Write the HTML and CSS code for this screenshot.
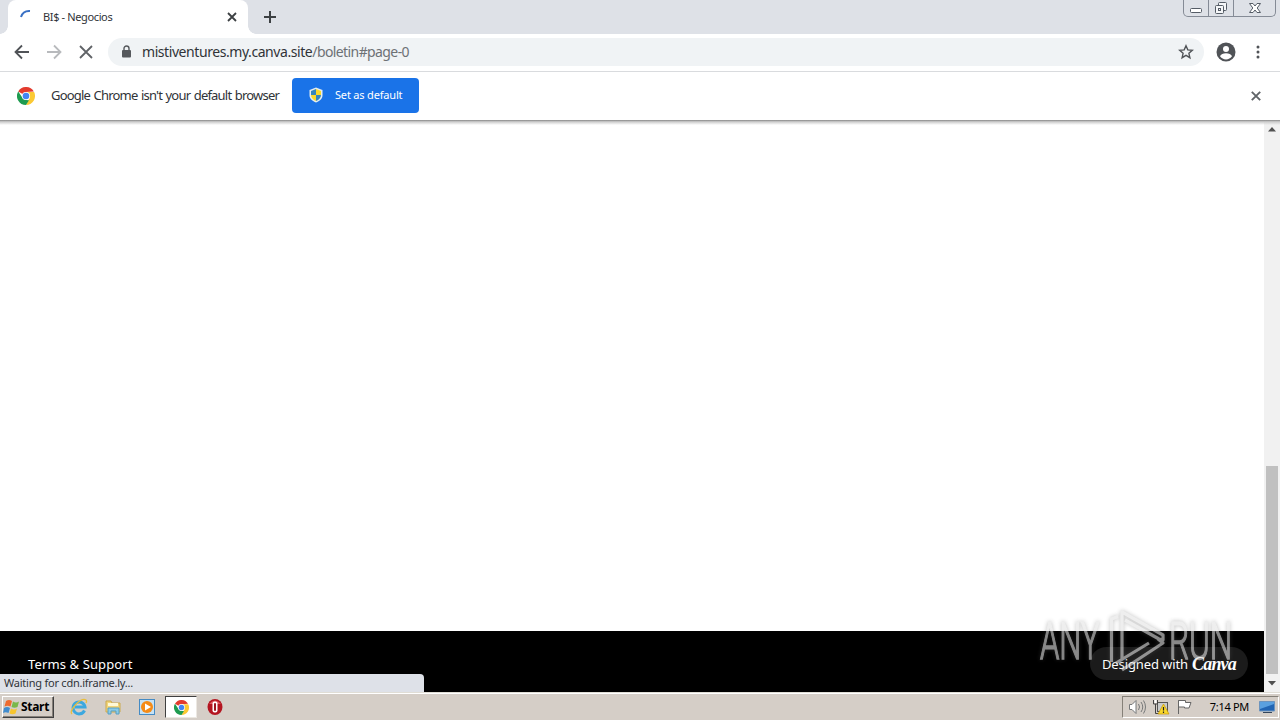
FILE: index.html
```html
<!DOCTYPE html>
<html lang="en">
<head>
  <meta charset="UTF-8" />
  <title>BI$ - Negocios</title>
  <link rel="stylesheet" href="styles.css">
</head>
<body>
  <!-- shared chrome logo -->
  <svg width="0" height="0" class="defs">
    <symbol id="chrome" viewBox="0 0 18 18">
      <path fill="#e33b2e" d="M9 9 1.2 4.5A9 9 0 0 1 16.8 4.5L9 5z"/>
      <path fill="#fbc934" d="M9 5h8.1A9 9 0 0 1 9 18l3.5-7z"/>
      <path fill="#1e9b50" d="M1.2 4.5 5.6 11 9 13l3 .2L9 18A9 9 0 0 1 1.2 4.5z"/>
      <circle cx="9" cy="9" r="4.1" fill="#fff"/>
      <circle cx="9" cy="9" r="3.3" fill="#4285f4"/>
    </symbol>
  </svg>

  <div class="tabstrip">
    <div class="tab">
      <svg class="spinner" width="16" height="16"><path d="M2 8Q4 1.500 11 2" fill="none" stroke="#3970c4" stroke-width="2"/></svg>
      <span class="tab-title">BI$ - Negocios</span>
      <svg class="tab-close" width="10" height="10"><path d="M1 1l8 8M9 1l-8 8" stroke="#3c4043" stroke-width="1.8"/></svg>
    </div>
    <svg class="new-tab" width="12" height="12"><path d="M6 0v12M0 6h12" stroke="#3c4043" stroke-width="2"/></svg>
    <div class="window-buttons">
      <span class="min"><svg width="14" height="14"><rect x="1.5" y="7.5" width="11" height="4" rx="1" fill="#fff" stroke="#555c66"/></svg></span>
      <span class="max"><svg width="14" height="14" fill="#f5f6f8" stroke="#555c66"><rect x="4.5" y="1.5" width="8" height="8" rx="1"/><rect x="1.5" y="4.5" width="8" height="8" rx="1"/><rect x="4.5" y="7.5" width="2" height="2"/></svg></span>
      <span class="close"><svg width="14" height="14"><path d="M1.5 2.5h3.500l2 2.500 2-2.500h3.500L9.200 7l3.300 4.500H9L7 9l-2 2.500H1.500L4.800 7z" fill="#fff" stroke="#555c66"/></svg></span>
    </div>
  </div>

  <div class="toolbar">
    <svg class="nav" width="16" height="16" fill="none" stroke="#505357" stroke-width="1.8"><path d="M15 8H2M8 1.500 1.500 8 8 14.500"/></svg>
    <svg class="nav" width="16" height="16" fill="none" stroke="#b8babd" stroke-width="1.8"><path d="M1 8h13M8 1.500 14.500 8 8 14.500"/></svg>
    <svg class="nav" width="16" height="16" stroke="#606367" stroke-width="1.8"><path d="M2 2l12 12M14 2 2 14"/></svg>
    <div class="omnibox">
      <svg width="10" height="13"><rect x="1" y="5" width="9" height="7.500" rx="1" fill="#55585c"/><path d="M3 6V3.500a2.500 2.500 0 0 1 5 0V6" fill="none" stroke="#55585c" stroke-width="1.400"/></svg>
      <span class="url">mistiventures.my.canva.site<span class="path">/boletin#page-0</span></span>
      <svg class="star" width="16" height="16"><path d="M8 1.800l1.800 4.100 4.500.400-3.400 3 1 4.400L8 11.400l-3.900 2.300 1-4.400-3.400-3 4.500-.400z" fill="none" stroke="#505357" stroke-width="1.400"/></svg>
    </div>
    <svg class="avatar" width="20" height="20"><circle cx="10" cy="10" r="9.500" fill="#505357"/><circle cx="10" cy="7" r="3" fill="#fff"/><path d="M4 14.300c1.300-4 10.700-4 12 0a7.300 7.300 0 0 1-12 0z" fill="#fff"/></svg>
    <svg class="kebab" width="4" height="14" fill="#505357"><circle cx="2" cy="2" r="1.500"/><circle cx="2" cy="7" r="1.500"/><circle cx="2" cy="12" r="1.500"/></svg>
  </div>

  <div class="infobar">
    <svg width="18" height="18"><use href="#chrome"/></svg>
    <span class="infobar-text">Google Chrome isn't your default browser</span>
    <button class="set-default">
      <svg width="14" height="16"><path d="M7 .5 13.500 3v5c0 4-3 6-6.500 7.500C3.500 14 .5 12 .5 8V3z" fill="#e4edf0"/><path d="M7 2v6H2V4z" fill="#3586bd"/><path d="M7 2l5 2v4H7z" fill="#fad92a"/><path d="M2 8h5v6C4 12.600 2 11 2 8z" fill="#fad92a"/><path d="M7 8h5c0 3-2 4.600-5 6z" fill="#3586bd"/></svg>
      <span>Set as default</span>
    </button>
    <svg class="infobar-close" width="10" height="10"><path d="M.8.8l8.400 8.400M9.200.8.8 9.200" stroke="#606468" stroke-width="1.9"/></svg>
  </div>

  <div class="viewport">
    <div class="page">
      <div class="footer">
        <span class="terms">Terms &amp; Support</span>
        <div class="badge"><span class="designed">Designed with</span><span class="canva">Canva</span></div>
      </div>
    </div>
    <div class="scrollbar">
      <svg width="8" height="5"><path d="M0 4.500 4 0l4 4.500z" fill="#505050"/></svg>
      <div class="thumb"></div>
      <svg width="8" height="5"><path d="M0 0h8L4 4.500z" fill="#505050"/></svg>
    </div>
    <div class="status">Waiting for cdn.iframe.ly...</div>
    <svg class="watermark" width="206" height="70">
      <text transform="translate(6 52) scale(.62 1)" textLength="96" lengthAdjust="spacingAndGlyphs">ANY</text>
      <text transform="translate(135 52) scale(.62 1)" textLength="102" lengthAdjust="spacingAndGlyphs">RUN</text>
      <path d="M84 9.500 77.500 12v43M88 53V5l41 23v5l-4-1-34-19M115 36 82 56M88 63l41-27-5-4"/>
    </svg>
  </div>

  <div class="taskbar">
    <div class="start">
      <svg width="17" height="16"><path d="M3 2q3-2 6 0L7.500 7.500q-3-1.500-6 0z" fill="#ee6b2f"/><path d="M10 2.500q3 2 6 0L14.500 8q-3 1.500-6 0z" fill="#79b84a"/><path d="M1 9q3-2 6 0l-1.500 5q-3-1.500-5.500 0z" fill="#418cce"/><path d="M8 9.500q3 2 6 0l-1.500 5q-3 1.500-6 0z" fill="#f7c52e"/></svg>
      <span>Start</span>
    </div>
    <div class="quick">
      <svg width="18" height="18" fill="none"><path d="M14.500 12.500A6 6 0 1 1 15 9H5" stroke="#3ca8df" stroke-width="3"/><path d="M2 16C-2 13 11-1 16 2c1 .8.5 2 0 3" stroke="#e8be3e" stroke-width="1.3"/></svg>
      <svg width="18" height="18"><path d="M2 3h5l1 2h8v9H2z" fill="#f1d57a" stroke="#cba94f"/><path d="M4 5h10v3H4z" fill="#fff9d6"/><path d="M4 16v-6h11v6h-3v-3H7v3z" fill="#8acbe8" stroke="#579fc3"/></svg>
      <svg width="18" height="18"><rect x="1.5" y="1.5" width="15" height="15" fill="#c6e2f5" stroke="#458bc4"/><circle cx="9" cy="9" r="6" fill="#f58b17"/><path d="M7 5.500v7l6-3.500z" fill="#fff"/></svg>
      <div class="active-task"><svg width="15" height="15"><use href="#chrome"/></svg></div>
      <svg width="18" height="18"><ellipse cx="9" cy="9" rx="7.500" ry="8" fill="#b41520"/><path d="M3 6Q9-1 15 6z" fill="#df5960"/><rect x="6.500" y="3.500" width="5" height="11" rx="2" fill="#fff"/><rect x="8" y="5" width="2" height="8" rx="1" fill="#9c1520"/></svg>
    </div>
    <div class="tray">
      <svg width="18" height="16" fill="#fff" stroke="#77797a"><path d="M1.500 5.500H4l4-4v13l-4-4H1.500z"/><path d="M10.500 5q2 3 0 6M13 3q3.500 5 0 10M15.500 1.500q4 6.500 0 13" fill="none"/></svg>
      <svg width="18" height="16"><rect x="5.500" y="3.500" width="10" height="9" fill="#c9cbcb" stroke="#555"/><path d="M1.500 1v4h4V1M3.500 5v9.500H8" fill="none" stroke="#444"/><path d="M2.500 1h2v3h-2z" fill="#fff"/><path d="M11.500 5l5.500 10H6z" fill="#fad92c" stroke="#c99700" stroke-width=".7"/><path d="M11.500 8v3.500M11.500 12.500V14" stroke="#222" stroke-width="1.2"/></svg>
      <svg width="16" height="16" fill="#fff" stroke="#666"><path d="M2.500 1v14"/><path d="M2.500 1.500h7v2H15L13 9H8.500V8h-6z"/></svg>
      <span class="clock">7:14 PM</span>
      <svg width="16" height="14"><path d="M.5 1.500h15V11H.5z" fill="#2265b3" stroke="#6c94be"/><path d="M1 2h14v2L1 9z" fill="#5aa0df"/><path d="M4 12.500h9" stroke="#34455b"/></svg>
    </div>
  </div>
</body>
</html>
```
FILE: styles.css
```css
* {
  box-sizing: border-box;
}
body {
  margin: 0;
  width: 1280px;
  height: 720px;
  overflow: hidden;
  display: flex;
  flex-direction: column;
  background: #fff;
  font-family: "Noto Sans", "Open Sans", sans-serif;
  font-size: 11px;
  color: #303338;
}
svg {
  display: block;
  flex: none;
}
.defs {
  position: absolute;
}
span {
  white-space: nowrap;
}

/* tabs */
.tabstrip {
  height: 34px;
  flex: none;
  display: flex;
  align-items: center;
  background: #dee1e7;
  padding-left: 8px;
}
.tab {
  width: 240px;
  height: 34px;
  display: flex;
  align-items: center;
  padding: 0 11px;
  background: #fff;
  border-radius: 8px 8px 0 0;
  position: relative;
}
.tab::before,
.tab::after {
  content: "";
  position: absolute;
  bottom: 0;
  width: 8px;
  height: 8px;
}
.tab::before {
  left: -8px;
  background: radial-gradient(circle at 0 0, #dee1e7 7.5px, #fff 8px);
}
.tab::after {
  right: -8px;
  background: radial-gradient(circle at 100% 0, #dee1e7 7.5px, #fff 8px);
}
.tab-title {
  margin-left: 8px;
  padding-bottom: 2px;
  letter-spacing: -0.37px;
}
.tab-close {
  margin-left: auto;
}
.new-tab {
  margin-left: 16px;
}
.window-buttons {
  align-self: flex-start;
  display: flex;
  height: 17px;
  margin-left: auto;
  margin-right: 4px;
  border: 1px solid #858b96;
  border-top: 0;
  border-radius: 0 0 5px 5px;
}
.window-buttons span {
  display: flex;
  align-items: center;
  justify-content: center;
  border-left: 1px solid #858b96;
}
.window-buttons .min {
  width: 24px;
  border-left: 0;
}
.window-buttons .max {
  width: 25px;
}
.window-buttons .close {
  width: 42px;
}

/* address bar */
.toolbar {
  height: 38px;
  flex: none;
  display: flex;
  align-items: center;
  padding: 0 20px 2px 14px;
  border-bottom: 1px solid #d9dbde;
}
.nav {
  margin-right: 16px;
}
.omnibox {
  display: flex;
  align-items: center;
  width: 1096px;
  height: 28px;
  margin-left: -2px;
  padding: 0 10px 0 13px;
  border-radius: 14px;
  background: #f0f3f5;
}
.url {
  margin-left: 11px;
  font-size: 14px;
  letter-spacing: -0.43px;
}
.path {
  color: #6d7175;
  letter-spacing: -0.6px;
}
.star {
  margin-left: auto;
}
.avatar {
  margin-left: 12px;
}
.kebab {
  margin-left: auto;
}

/* default browser bar */
.infobar {
  height: 49px;
  flex: none;
  display: flex;
  align-items: center;
  padding: 0 19px 1px 17px;
}
.infobar-text {
  width: 241px;
  margin-left: 16px;
  padding-bottom: 2px;
  font-size: 13px;
  letter-spacing: -0.8px;
  word-spacing: 0.9px;
}
.set-default {
  width: 127px;
  height: 35px;
  display: flex;
  align-items: center;
  margin-bottom: 2px;
  padding: 0 0 0 17px;
  border: 0;
  border-radius: 4px;
  background: #1a73e8;
  color: #fff;
  font-family: inherit;
  font-size: 11px;
  letter-spacing: -0.18px;
}
.set-default span {
  margin-left: 12px;
  padding-bottom: 2px;
}
.infobar-close {
  margin-left: auto;
}

/* page */
.viewport {
  flex: 1;
  display: flex;
  position: relative;
}
.viewport::before {
  content: "";
  position: absolute;
  left: 0;
  right: 0;
  top: -1px;
  height: 5px;
  background: linear-gradient(#858585, #ccc 35%, rgba(255, 255, 255, 0));
}
.page {
  flex: 1;
  display: flex;
  flex-direction: column;
  justify-content: flex-end;
}
.footer {
  height: 61px;
  display: flex;
  align-items: flex-start;
  justify-content: space-between;
  padding: 16px 16px 0 28px;
  background: #000;
  color: #fff;
}
.terms {
  margin-top: 8px;
  font-size: 13px;
  line-height: 18px;
  letter-spacing: 0.12px;
}
.badge {
  display: flex;
  align-items: center;
  width: 158px;
  height: 33px;
  padding-left: 12px;
  border-radius: 17px;
  background: #1b1b1b;
}
.designed {
  width: 90px;
  font-size: 13px;
  letter-spacing: -0.12px;
}
.canva {
  font-family: "Liberation Serif", serif;
  font-size: 18px;
  font-style: italic;
  font-weight: bold;
  line-height: 20px;
  letter-spacing: -0.8px;
}
.scrollbar {
  width: 16px;
  display: flex;
  flex-direction: column;
  align-items: center;
  padding: 6px 0;
  background: #f1f1f1;
}
.thumb {
  width: 12px;
  height: 208px;
  margin-top: auto;
  margin-bottom: 7px;
  background: #c0c0c0;
}
.status {
  position: absolute;
  left: 0;
  bottom: 0;
  width: 424px;
  height: 18px;
  padding-left: 4px;
  border-radius: 0 4px 0 0;
  background: #dee1e8;
  line-height: 18px;
  letter-spacing: -0.23px;
}
.watermark {
  position: absolute;
  left: 1034px;
  top: 486px;
  filter: drop-shadow(0 0 2px rgba(90, 90, 90, 0.65));
  opacity: 0.6;
}
.watermark text {
  font-family: Roboto, sans-serif;
  font-size: 51px;
  font-weight: 300;
  fill: #e4e4e4;
  stroke: #e4e4e4;
  stroke-width: 1.4px;
}
.watermark path {
  fill: none;
  stroke: #e4e4e4;
  stroke-width: 3.2px;
  stroke-linejoin: round;
}

/* taskbar */
.taskbar {
  height: 28px;
  flex: none;
  display: flex;
  align-items: center;
  padding: 1px 1px 0 2px;
  background: #d5cec7;
  border-top: 1px solid #e0ddd5;
  box-shadow: inset 0 1px #fff;
  color: #000;
}
.start {
  width: 52px;
  height: 22px;
  display: flex;
  align-items: center;
  gap: 1px;
  border: 1px solid;
  border-color: #fff #404040 #404040 #fff;
  box-shadow: inset -1px -1px #868079;
  font-weight: bold;
  font-size: 12px;
  letter-spacing: -0.3px;
}
.start span {
  padding-bottom: 1px;
}
.quick {
  display: flex;
  align-items: center;
  margin-left: 16px;
  gap: 16px;
}
.active-task {
  width: 32px;
  height: 22px;
  display: flex;
  align-items: center;
  justify-content: center;
  margin: 0 -7px;
  background: #fff;
  border: 1px solid;
  border-color: #404040 #ece8e2 #ece8e2 #404040;
}
.tray {
  width: 157px;
  height: 22px;
  display: flex;
  align-items: center;
  gap: 6px;
  margin-left: auto;
  padding: 0 3px 0 5px;
  border: 1px solid;
  border-color: #858078 #fff #fff #858078;
}
.clock {
  margin-left: auto;
  margin-right: 4px;
  padding-bottom: 2px;
  letter-spacing: -0.3px;
}
```
